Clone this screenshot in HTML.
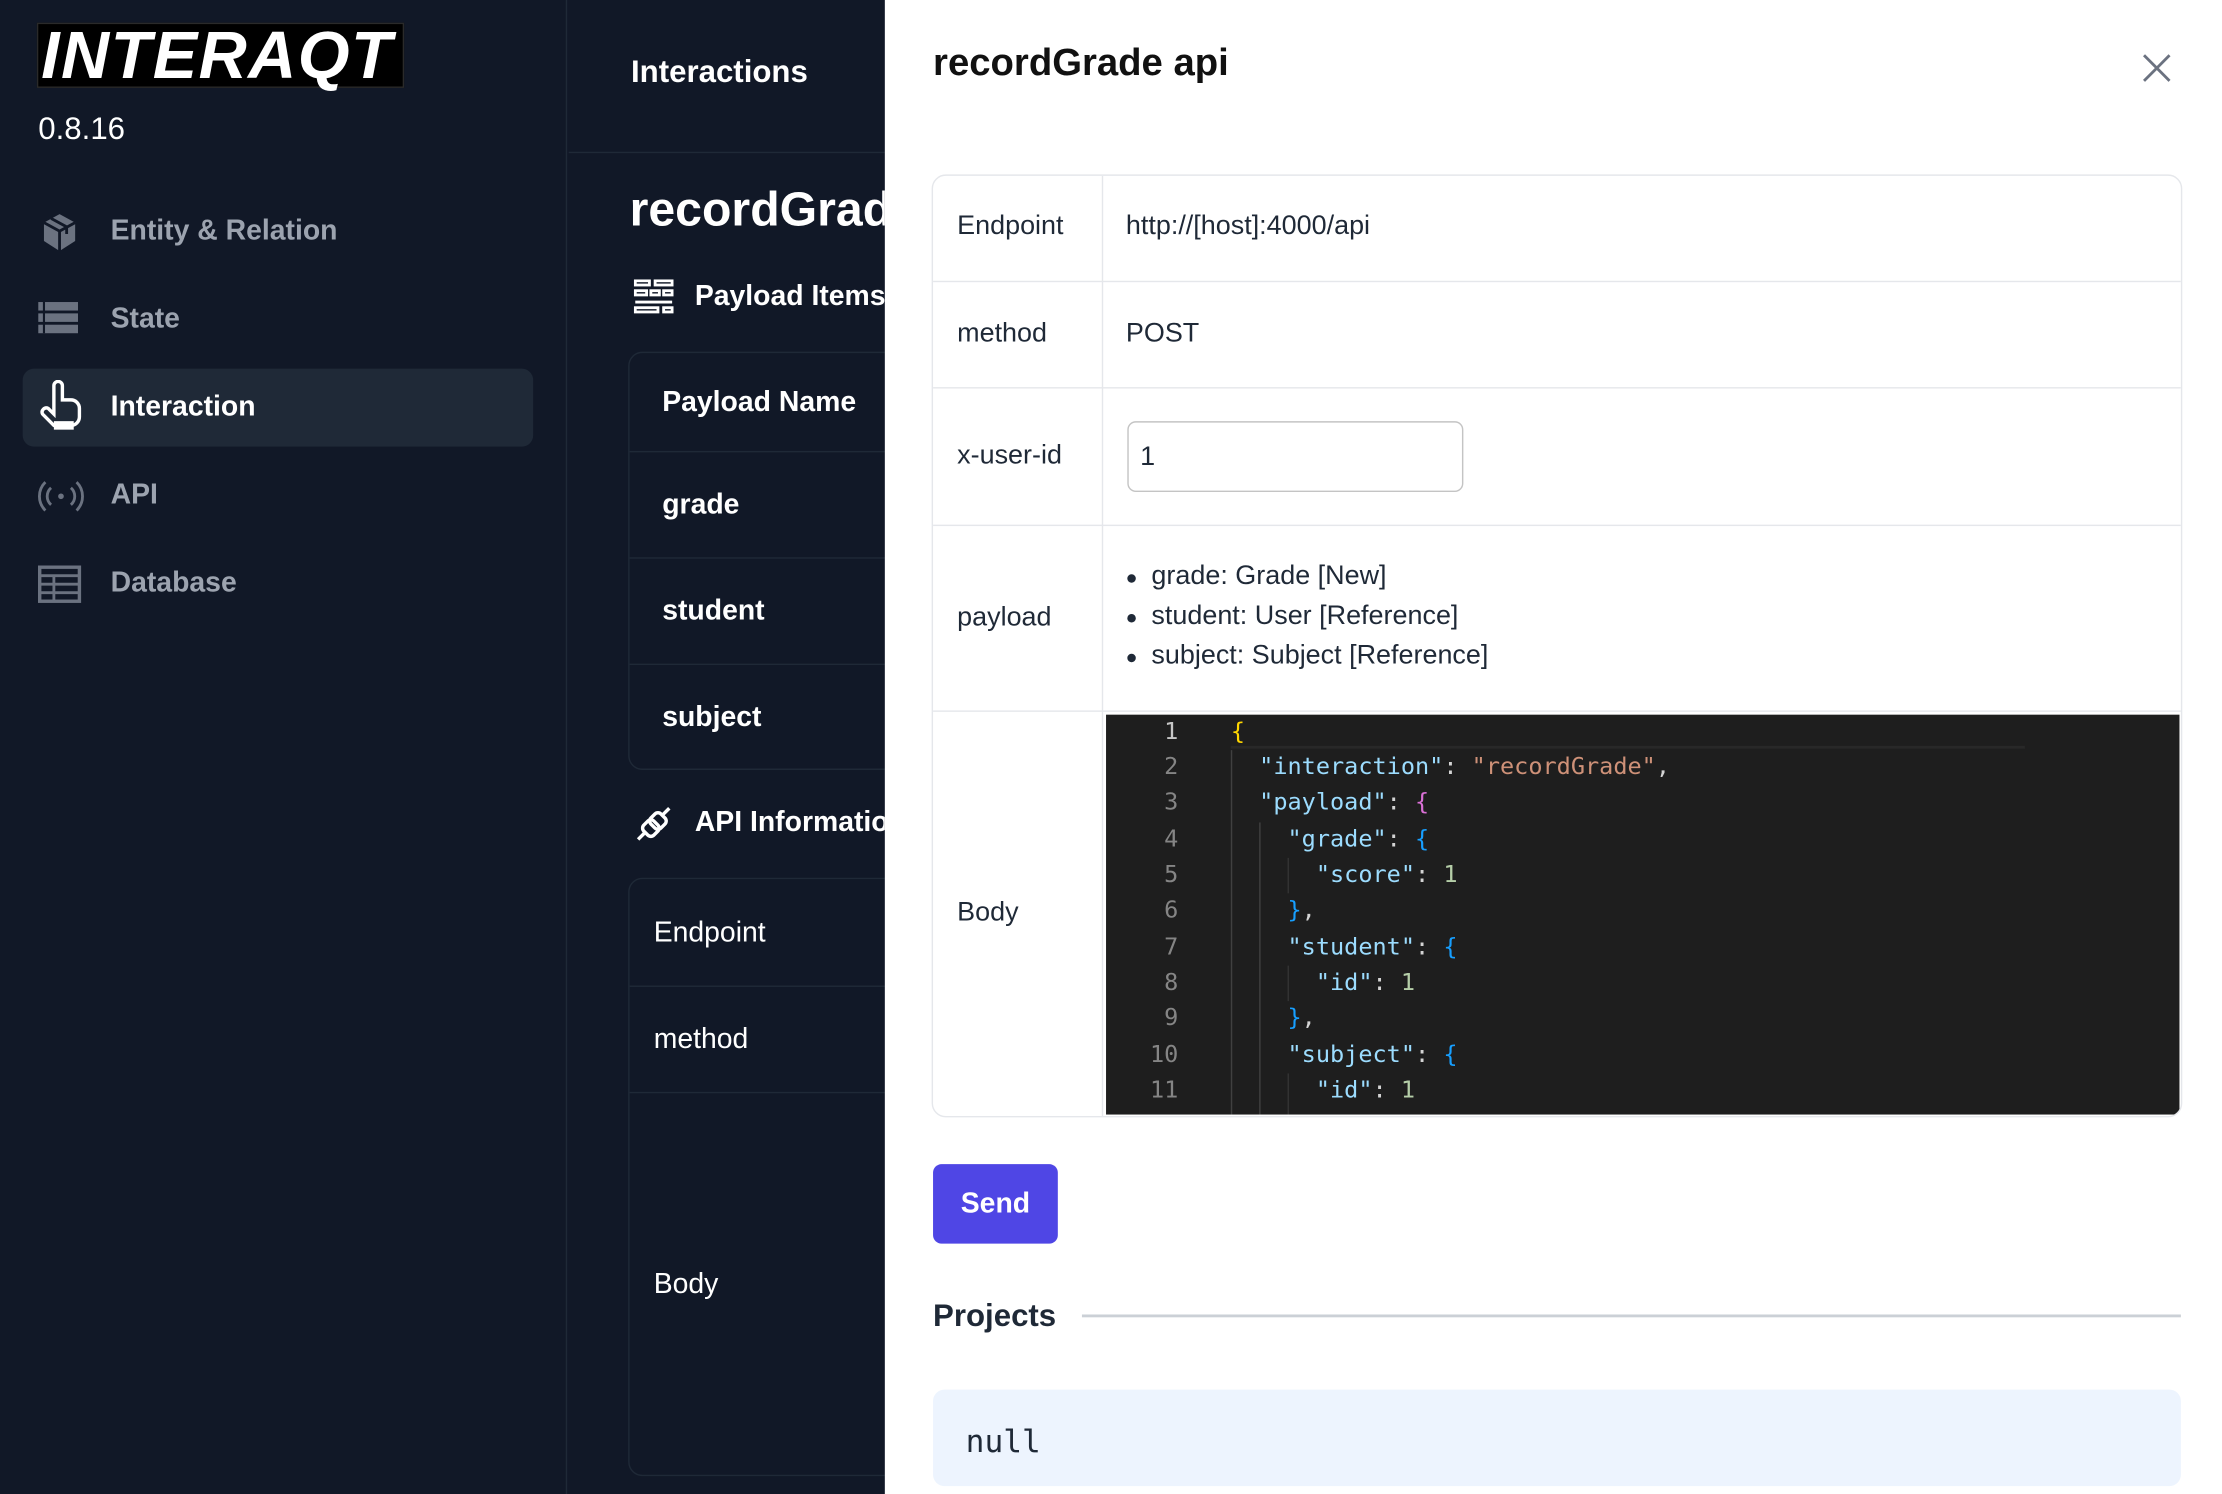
<!DOCTYPE html>
<html><head><meta charset="utf-8"><style>
*{box-sizing:border-box;margin:0;padding:0}
html,body{width:2222px;height:1494px;overflow:hidden;background:#111827}
#root{width:1568px;height:1054px;transform:scale(1.418);transform-origin:0 0;position:relative;font-family:"Liberation Sans",Arial,sans-serif;background:#111827}
.abs{position:absolute}
.side{left:0;top:0;width:400px;height:1054px;background:#111827;border-right:1px solid #1f2937}
.logo{left:26px;top:16px;width:259px;height:46px;border:1px solid #2a2a2a;background:#000;color:#fff;font-weight:bold;font-style:italic;font-size:47px;line-height:44px;padding-left:2px;letter-spacing:1px}
.ver{left:27px;top:78px;color:#fff;font-size:22px}
.nav{left:16px;width:360px;height:55px;border-radius:8px;color:#9ca3af;font-size:20px;font-weight:bold;line-height:55px;padding-left:62px}
.nav svg{position:absolute;left:10px;top:12px}
.nav.act{background:#1f2937;color:#fff}
.mid{left:401px;top:0;width:223px;height:1054px;overflow:hidden;color:#fff}
.mid .t{font-weight:bold;white-space:nowrap;position:absolute}
.tb{position:absolute;left:42px;width:400px;border:1px solid #1f2937;border-radius:10px}
.tb div{border-bottom:1px solid #1f2937;font-size:20px;padding-left:23px;white-space:nowrap}
.modal{left:624px;top:0;width:944px;height:1054px;background:#fff;color:#1f2937}
.grid{position:absolute;left:33px;top:123px;width:882px;height:665px;border:1px solid #e5e7eb;border-radius:10px;overflow:hidden}
.row{position:absolute;left:0;width:100%;border-bottom:1px solid #e5e7eb;font-size:19px}
.row .k{position:absolute;left:17px}
.row .v{position:absolute;left:136px}
.vline{position:absolute;left:119px;top:0;width:1px;height:100%;background:#e5e7eb}
.code{position:absolute;left:122px;top:380px;width:757px;height:282px;background:#1e1e1e;font-family:"DejaVu Sans Mono","Liberation Mono",monospace;font-size:16.6px;overflow:hidden}
.ln{position:absolute;left:0;width:51px;text-align:right;color:#858585}
.cl{position:absolute;left:88px;white-space:pre;color:#d4d4d4}
.k1{color:#9cdcfe}.s1{color:#ce9178}.n1{color:#b5cea8}.y{color:#ffd700}.p{color:#da70d6}.b{color:#179fff}
.li{position:absolute;left:154px;white-space:nowrap}
.li:before{content:"";position:absolute;left:-17px;top:9px;width:6px;height:6px;border-radius:50%;background:#1f2937}
</style></head><body><div id="root">
<div class="abs side">
 <div class="abs logo">INTERAQT</div>
 <div class="abs ver">0.8.16</div>
 <div class="abs nav" style="top:136px"><svg width="32" height="32" viewBox="0 0 32 32"><path d="M16 3 L27 9 V22 L16 29 L5 22 V9 Z" fill="#6b7280"/><path d="M5 9 L16 15 L27 9 M16 15 V29 M10 6 L21 12 V17" stroke="#111827" stroke-width="2" fill="none"/></svg>Entity &amp; Relation</div>
 <div class="abs nav" style="top:198px"><svg width="32" height="32" viewBox="0 0 32 32"><rect x="1" y="3" width="28" height="6" fill="#6b7280"/><rect x="1" y="11" width="28" height="6" fill="#6b7280"/><rect x="1" y="19" width="28" height="6" fill="#6b7280"/><path d="M5 3v22" stroke="#111827" stroke-width="1.5"/></svg>State</div>
 <div class="abs nav act" style="top:260px"><svg width="34" height="36" viewBox="0 0 34 36" style="top:8px"><path d="M12 24 V4 a3 3 0 0 1 6 0 V14 h6 a6 6 0 0 1 6 6 v6 a6 6 0 0 1 -6 6 H12 l-8 -8 a3 3 0 0 1 4 -4 Z" fill="none" stroke="#fff" stroke-width="2.4"/><rect x="12" y="29" width="14" height="6" fill="#fff"/></svg>Interaction</div>
 <div class="abs nav" style="top:322px"><svg width="34" height="32" viewBox="0 0 34 32"><g fill="none" stroke="#6b7280" stroke-width="2"><path d="M6 6a14 14 0 0 0 0 20M28 6a14 14 0 0 1 0 20M10 10a8 8 0 0 0 0 12M24 10a8 8 0 0 1 0 12"/></g><circle cx="17" cy="16" r="2" fill="#6b7280"/></svg>API</div>
 <div class="abs nav" style="top:384px"><svg width="32" height="32" viewBox="0 0 32 32"><rect x="2" y="4" width="28" height="24" fill="none" stroke="#6b7280" stroke-width="2.4"/><path d="M2 10h28M2 16h28M2 22h28M12 10v18" stroke="#6b7280" stroke-width="2"/></svg>Database</div>
</div>
<div class="abs mid">
 <div class="t" style="left:44px;top:38px;font-size:22px">Interactions</div>
 <div class="abs" style="left:0;top:107px;width:223px;height:1px;background:#1f2937"></div>
 <div class="t" style="left:43px;top:129px;font-size:34px">recordGrade</div>
 <svg class="abs" style="left:46px;top:197px" width="28" height="26" viewBox="0 0 28 26"><g fill="none" stroke="#fff" stroke-width="2"><rect x="1" y="1" width="10" height="3"/><rect x="15" y="1" width="12" height="3"/><rect x="1" y="8" width="8" height="3"/><rect x="12" y="8" width="6" height="3"/><rect x="21" y="8" width="6" height="3"/><path d="M1 16h26"/><rect x="1" y="20" width="16" height="3"/><rect x="21" y="20" width="6" height="3"/></g></svg>
 <div class="t" style="left:89px;top:198px;font-size:20px">Payload Items</div>
 <div class="tb" style="top:248px;height:295px">
  <div style="height:70px;line-height:70px;font-weight:bold">Payload Name</div>
  <div style="height:75px;line-height:75px;font-weight:bold">grade</div>
  <div style="height:75px;line-height:75px;font-weight:bold">student</div>
  <div style="height:74px;line-height:74px;font-weight:bold;border:0">subject</div>
 </div>
 <svg class="abs" style="left:45px;top:566px" width="30" height="30" viewBox="0 0 30 30"><g fill="none" stroke="#fff" stroke-width="2.4"><path d="M4 26l5-5M26 4l-5 5"/><rect x="8" y="13" width="10" height="10" rx="3" transform="rotate(-45 13 18)"/><rect x="13" y="8" width="10" height="10" rx="3" transform="rotate(-45 18 13)"/></g></svg>
 <div class="t" style="left:89px;top:569px;font-size:20px">API Information</div>
 <div class="tb" style="top:619px;height:422px">
  <div style="height:76px;line-height:76px;padding-left:17px">Endpoint</div>
  <div style="height:75px;line-height:75px;padding-left:17px">method</div>
  <div style="height:270px;line-height:270px;padding-left:17px;border:0">Body</div>
 </div>
</div>
<div class="abs modal">
 <div class="abs" style="left:34px;top:29px;font-size:27px;font-weight:bold;color:#111">recordGrade api</div>
 <svg class="abs" style="left:886px;top:37px" width="22" height="22" viewBox="0 0 22 22"><path d="M2 2L20 20M20 2L2 20" stroke="#6b7280" stroke-width="2"/></svg>
 <div class="grid">
  <div class="vline"></div>
  <div class="row" style="top:0;height:75px"><span class="k" style="top:25px">Endpoint</span><span class="v" style="top:25px">http://[host]:4000/api</span></div>
  <div class="row" style="top:75px;height:75px"><span class="k" style="top:26px">method</span><span class="v" style="top:26px">POST</span></div>
  <div class="row" style="top:150px;height:97px"><span class="k" style="top:37px">x-user-id</span><div class="abs" style="left:137px;top:23px;width:237px;height:50px;border:1px solid #c4c4c4;border-radius:6px;padding:14px 8px">1</div></div>
  <div class="row" style="top:247px;height:131px"><span class="k" style="top:54px">payload</span>
   <span class="li" style="top:25px">grade: Grade [New]</span>
   <span class="li" style="top:53px">student: User [Reference]</span>
   <span class="li" style="top:81px">subject: Subject [Reference]</span></div>
  <div class="row" style="top:378px;height:287px;border:0"><span class="k" style="top:131px">Body</span></div>
  <div class="code">
   <div class="abs" style="left:88px;top:0;width:560px;height:24px;border-bottom:2px solid #282828"></div>
   <div class="abs" style="left:88px;top:25px;width:1px;height:260px;background:#404040"></div>
   <div class="abs" style="left:108px;top:76px;width:1px;height:210px;background:#404040"></div>
   <div class="abs" style="left:128px;top:101px;width:1px;height:25px;background:#333"></div>
   <div class="abs" style="left:128px;top:177px;width:1px;height:25px;background:#333"></div>
   <div class="abs" style="left:128px;top:253px;width:1px;height:30px;background:#333"></div>
   <div class="ln" style="top:2px;color:#c6c6c6">1</div><div class="cl" style="top:2px"><span class="y">{</span></div>
   <div class="ln" style="top:27px">2</div><div class="cl" style="top:27px">  <span class="k1">"interaction"</span>: <span class="s1">"recordGrade"</span>,</div>
   <div class="ln" style="top:52px">3</div><div class="cl" style="top:52px">  <span class="k1">"payload"</span>: <span class="p">{</span></div>
   <div class="ln" style="top:78px">4</div><div class="cl" style="top:78px">    <span class="k1">"grade"</span>: <span class="b">{</span></div>
   <div class="ln" style="top:103px">5</div><div class="cl" style="top:103px">      <span class="k1">"score"</span>: <span class="n1">1</span></div>
   <div class="ln" style="top:128px">6</div><div class="cl" style="top:128px">    <span class="b">}</span>,</div>
   <div class="ln" style="top:154px">7</div><div class="cl" style="top:154px">    <span class="k1">"student"</span>: <span class="b">{</span></div>
   <div class="ln" style="top:179px">8</div><div class="cl" style="top:179px">      <span class="k1">"id"</span>: <span class="n1">1</span></div>
   <div class="ln" style="top:204px">9</div><div class="cl" style="top:204px">    <span class="b">}</span>,</div>
   <div class="ln" style="top:230px">10</div><div class="cl" style="top:230px">    <span class="k1">"subject"</span>: <span class="b">{</span></div>
   <div class="ln" style="top:255px">11</div><div class="cl" style="top:255px">      <span class="k1">"id"</span>: <span class="n1">1</span></div>
  </div>
 </div>
 <div class="abs" style="left:34px;top:821px;width:88px;height:56px;background:#4f46e5;border-radius:6px;color:#fff;font-size:20px;font-weight:bold;text-align:center;line-height:56px">Send</div>
 <div class="abs" style="left:34px;top:915px;font-size:22px;font-weight:bold">Projects</div>
 <div class="abs" style="left:139px;top:927px;width:775px;height:2px;background:#cbd0d6"></div>
 <div class="abs" style="left:34px;top:980px;width:880px;height:68px;background:#edf4fe;border-radius:8px;font-family:'DejaVu Sans Mono','Liberation Mono',monospace;font-size:22px;padding:25px 0 0 23px">null</div>
</div>
</div></body></html>
